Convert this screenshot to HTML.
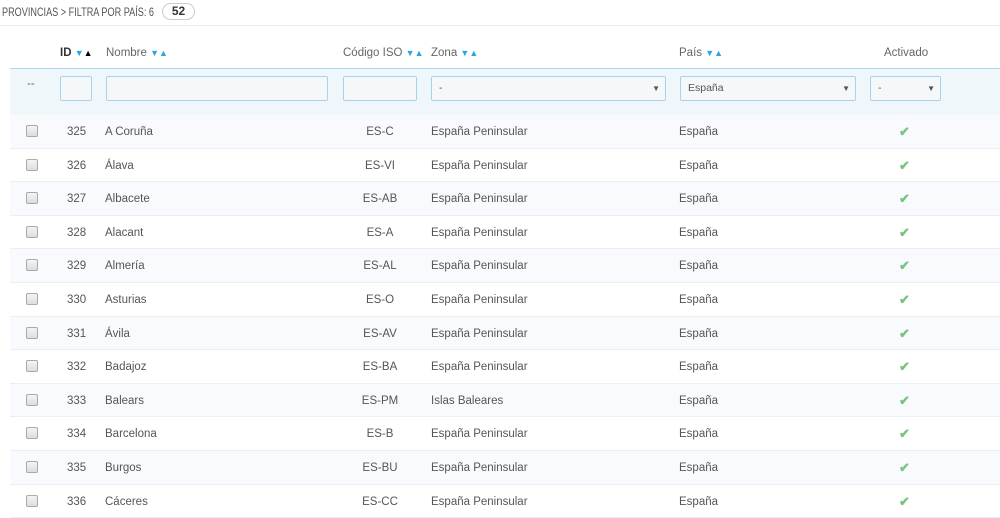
<!DOCTYPE html><html><head><meta charset="utf-8"><style>
body{margin:0;width:1000px;height:516px;overflow:hidden;background:#fff;font-family:"Liberation Sans",sans-serif;font-size:11.5px;color:#555;position:relative}
.a{position:absolute;white-space:nowrap}
.title{left:2px;top:5px;font-size:12px;color:#555;transform:scaleX(.76);transform-origin:left}
.badge{left:162px;top:3px;width:31px;height:15px;border:1px solid #ccc;border-radius:9px;text-align:center;font-weight:bold;font-size:12px;line-height:15px;color:#333}
.hd{top:47px;color:#666}
.s{color:#2ea3e3;font-size:9px}
.filter{left:10px;top:68px;width:990px;height:46px;background:#eff7fb;border-top:1px solid #a8d8ee;border-bottom:1px solid #a8d8ee}
.in{position:absolute;top:76px;height:25px;border:1px solid #a8d3ea;border-radius:2px;background:#f5f8f9;box-sizing:border-box;font-size:10.5px;line-height:23px;padding-left:7px;color:#555}
.in b{position:absolute;right:5px;top:0;font-size:8px;font-weight:normal;color:#555}
.row{position:absolute;left:10px;width:990px;height:33.6px;border-bottom:1px solid #eceef0;box-sizing:border-box}
.cb{position:absolute;left:16px;top:10px;width:10px;height:10px;border:1px solid #aaa;border-radius:2px;background:linear-gradient(#f4f4f4,#ddd)}
.row span{position:absolute;top:11px}
.ok{color:#78c47e;font-weight:bold;font-size:13px}
</style></head><body>
<div class="a title">PROVINCIAS &gt; FILTRA POR PAÍS: 6</div>
<div class="a badge">52</div>
<div class="a" style="left:0;top:25px;width:1000px;height:1px;background:#eee"></div>
<div class="a hd" style="left:60px;color:#333;font-weight:bold">ID <span class="s">▼</span><span style="font-size:9px;color:#000">▲</span></div>
<div class="a hd" style="left:106px">Nombre <span class="s">▼▲</span></div>
<div class="a hd" style="left:343px">Código ISO <span class="s">▼▲</span></div>
<div class="a hd" style="left:431px">Zona <span class="s">▼▲</span></div>
<div class="a hd" style="left:679px">País <span class="s">▼▲</span></div>
<div class="a hd" style="left:884px">Activado</div>
<div class="a filter"></div>
<div class="a" style="left:27px;top:78px;color:#666">--</div>
<div class="in" style="left:60px;width:32px"></div>
<div class="in" style="left:106px;width:222px"></div>
<div class="in" style="left:343px;width:74px"></div>
<div class="in" style="left:431px;width:235px">-<b>▼</b></div>
<div class="in" style="left:680px;width:176px">España<b>▼</b></div>
<div class="in" style="left:870px;width:71px">-<b>▼</b></div>
<div id="rows"></div>
<script>
var d=[["325","A Coruña","ES-C","España Peninsular"],["326","Álava","ES-VI","España Peninsular"],["327","Albacete","ES-AB","España Peninsular"],["328","Alacant","ES-A","España Peninsular"],["329","Almería","ES-AL","España Peninsular"],["330","Asturias","ES-O","España Peninsular"],["331","Ávila","ES-AV","España Peninsular"],["332","Badajoz","ES-BA","España Peninsular"],["333","Balears","ES-PM","Islas Baleares"],["334","Barcelona","ES-B","España Peninsular"],["335","Burgos","ES-BU","España Peninsular"],["336","Cáceres","ES-CC","España Peninsular"]];
var h="";d.forEach(function(r,i){h+='<div class="row" style="top:'+(115+i*33.6)+'px;background:'+(i%2?'#fff':'#f8fafd')+'"><div class="cb"></div><span style="left:57px">'+r[0]+'</span><span style="left:95px">'+r[1]+'</span><span style="left:330px;width:80px;text-align:center">'+r[2]+'</span><span style="left:421px">'+r[3]+'</span><span style="left:669px">España</span><span class="ok" style="left:889px;top:9px">✔</span></div>'});
document.getElementById("rows").innerHTML=h;
</script>
</body></html>
